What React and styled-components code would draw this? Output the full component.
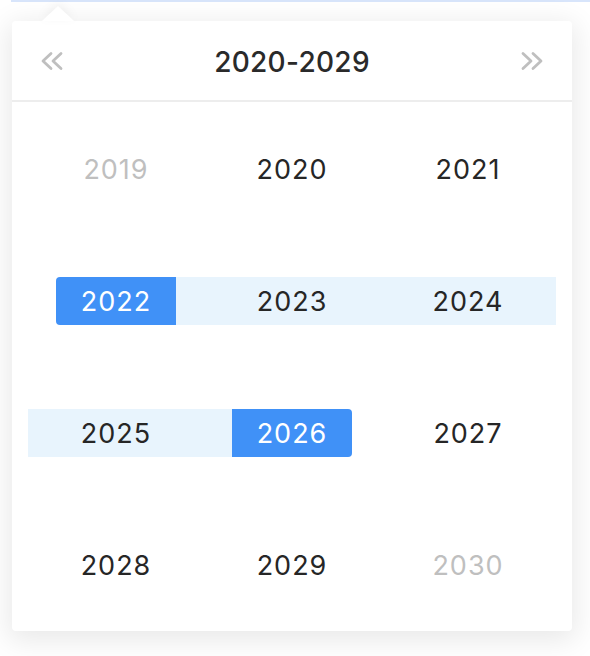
import React from "react";
import styled, { createGlobalStyle } from "styled-components";

const GlobalStyle = createGlobalStyle`
  * { box-sizing: border-box; }
  body {
    margin: 0;
    background: #ffffff;
    font-family: Inter, "Liberation Sans", sans-serif;
  }
`;

const Page = styled.div`
  width: 590px;
  height: 656px;
  overflow: hidden;
`;

const InputEdge = styled.div`
  height: 2px;
  margin-left: 11px;
  background: #d8e5fb;
`;

const Popper = styled.div`
  position: relative;
  margin: 19px 18px 0 12px;
`;

const Arrow = styled.div`
  position: absolute;
  top: -15px;
  left: 30px;
  width: 0;
  height: 0;
  border-style: solid;
  border-width: 0 16px 15px 16px;
  border-color: transparent transparent #ffffff transparent;
  filter: drop-shadow(0 -3px 4px rgba(0, 0, 0, 0.05));
  z-index: 2;
`;

const Panel = styled.div`
  width: 560px;
  background: #ffffff;
  border-radius: 4px;
  box-shadow: 0 6px 28px 4px rgba(0, 0, 0, 0.09);
`;

const Header = styled.div`
  height: 81px;
  display: flex;
  align-items: center;
  justify-content: space-between;
  padding: 0 28px;
  border-bottom: 2px solid #ededed;
`;

const NavButton = styled.button`
  display: flex;
  align-items: center;
  justify-content: center;
  padding: 0;
  border: none;
  background: none;
  cursor: pointer;
  color: #bfbfbf;
`;

const Title = styled.div`
  font-size: 28px;
  font-weight: 500;
  letter-spacing: 0.3px;
  color: #2a2a2a;
  padding-top: 2px;
`;

const Grid = styled.div`
  display: grid;
  grid-template-columns: repeat(3, 176px);
  grid-auto-rows: 132px;
  padding: 1px 16px 0;
`;

const Cell = styled.div`
  display: flex;
  align-items: center;
`;

const bandBg = (range) => {
  if (range === "in") return "#e8f4fd";
  if (range === "start") return "linear-gradient(to right, transparent 50%, #e8f4fd 50%)";
  if (range === "end") return "linear-gradient(to right, #e8f4fd 50%, transparent 50%)";
  return "transparent";
};

const Band = styled.div`
  width: 100%;
  height: 48px;
  display: flex;
  justify-content: center;
  background: ${(p) => bandBg(p.$range)};
`;

const Year = styled.span`
  width: 120px;
  height: 48px;
  padding-top: 1px;
  line-height: 48px;
  text-align: center;
  font-size: 27px;
  font-weight: 400;
  letter-spacing: 1px;
  color: ${(p) => (p.$selected ? "#ffffff" : p.$muted ? "#bfbfbf" : "#262626")};
  background: ${(p) => (p.$selected ? "#4091f7" : "transparent")};
  border-radius: ${(p) =>
    p.$range === "start" ? "4px 0 0 4px" : p.$range === "end" ? "0 4px 4px 0" : "0"};
  overflow: hidden;
  cursor: pointer;
`;

const Chevrons = ({ dir }) => (
  <svg width="24" height="20" viewBox="0 0 24 20" fill="none">
    <g
      stroke="currentColor"
      strokeWidth="2.8"
      strokeLinecap="round"
      strokeLinejoin="round"
      transform={dir === "right" ? "translate(24 0) scale(-1 1)" : undefined}
    >
      <polyline points="11,2.5 3,10 11,17.5" />
      <polyline points="21,2.5 13,10 21,17.5" />
    </g>
  </svg>
);

const years = [
  { y: 2019, muted: true },
  { y: 2020 },
  { y: 2021 },
  { y: 2022, selected: true, range: "start" },
  { y: 2023, range: "in" },
  { y: 2024, range: "in" },
  { y: 2025, range: "in" },
  { y: 2026, selected: true, range: "end" },
  { y: 2027 },
  { y: 2028 },
  { y: 2029 },
  { y: 2030, muted: true },
];

export default function App() {
  return (
    <Page>
      <GlobalStyle />
      <InputEdge />
      <Popper>
        <Arrow />
        <Panel>
          <Header>
            <NavButton aria-label="Previous decade">
              <Chevrons dir="left" />
            </NavButton>
            <Title>2020-2029</Title>
            <NavButton aria-label="Next decade">
              <Chevrons dir="right" />
            </NavButton>
          </Header>
          <Grid>
            {years.map((item) => (
              <Cell key={item.y}>
                <Band $range={item.range}>
                  <Year
                    $selected={item.selected}
                    $muted={item.muted}
                    $range={item.range}
                  >
                    {item.y}
                  </Year>
                </Band>
              </Cell>
            ))}
          </Grid>
        </Panel>
      </Popper>
    </Page>
  );
}
